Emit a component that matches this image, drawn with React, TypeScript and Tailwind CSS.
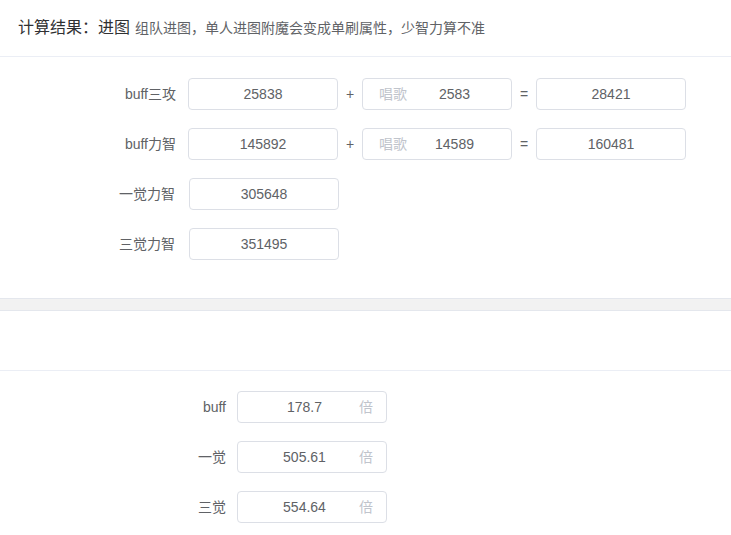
import React from 'react';

const font = { fontFamily: '"Liberation Sans", "Noto Sans CJK SC", Arial, sans-serif' };

interface Box {
  value: string;
  prefix?: string;
  suffix?: string;
}

const Field: React.FC<Box> = ({ value, prefix, suffix }) => (
  <div className="relative w-[150px] h-8 border border-[#dcdfe6] rounded bg-white flex items-center text-sm text-[#606266]">
    {prefix && <span className="absolute left-[16px] text-[#c0c4cc]">{prefix}</span>}
    <span
      className={`flex-1 text-center ${prefix ? 'pl-[50px] pr-[15px]' : ''} ${suffix ? 'pl-[15px] pr-[30px]' : ''}`}
    >
      {value}
    </span>
    {suffix && <span className="absolute right-[13px] text-[#c0c4cc]">{suffix}</span>}
  </div>
);

const Op: React.FC<{ children: React.ReactNode }> = ({ children }) => (
  <span className="w-6 text-center text-sm text-[#606266]">{children}</span>
);

const App: React.FC = () => {
  const topRows = [
    { label: 'buff三攻', base: '25838', song: '2583', total: '28421' },
    { label: 'buff力智', base: '145892', song: '14589', total: '160481' },
  ];
  const statRows = [
    { label: '一觉力智', value: '305648' },
    { label: '三觉力智', value: '351495' },
  ];
  const resultRows = [
    { label: 'buff', value: '178.7' },
    { label: '一觉', value: '505.61' },
    { label: '三觉', value: '554.64' },
  ];

  return (
    <div className="w-[731px] h-[535px] bg-white overflow-hidden" style={font}>
      {/* Card 1 */}
      <div className="border-b border-[#e4e7ed]">
        <div className="h-[57px] px-[18px] flex items-center border-b border-[#ebeef5]">
          <span className="text-base text-[#303133]">计算结果：进图</span>
          <span className="ml-[5px] text-sm text-[#606266]">组队进图，单人进图附魔会变成单刷属性，少智力算不准</span>
        </div>
        <div className="pt-[21px] pb-[38px] flex flex-col gap-[18px]">
          {topRows.map((r) => (
            <div key={r.label} className="flex items-center h-8">
              <span className="w-[188px] pr-3 text-right text-sm text-[#606266]">{r.label}</span>
              <Field value={r.base} />
              <Op>+</Op>
              <Field value={r.song} prefix="唱歌" />
              <Op>=</Op>
              <Field value={r.total} />
            </div>
          ))}
          {statRows.map((r) => (
            <div key={r.label} className="flex items-center h-8">
              <span className="w-[189px] pr-[14px] text-right text-sm text-[#606266]">{r.label}</span>
              <Field value={r.value} />
            </div>
          ))}
        </div>
      </div>

      {/* gap between cards */}
      <div className="h-[11px] bg-[#f2f2f2]" />

      {/* Card 2 */}
      <div className="border-t border-[#e4e7ed]">
        <div className="h-[60px] border-b border-[#ebeef5]" />
        <div className="pt-[20px] flex flex-col gap-[18px]">
          {resultRows.map((r) => (
            <div key={r.label} className="flex items-center h-8">
              <span className="w-[237px] pr-[11px] text-right text-sm text-[#606266]">{r.label}</span>
              <Field value={r.value} suffix="倍" />
            </div>
          ))}
        </div>
      </div>
    </div>
  );
};

export default App;
